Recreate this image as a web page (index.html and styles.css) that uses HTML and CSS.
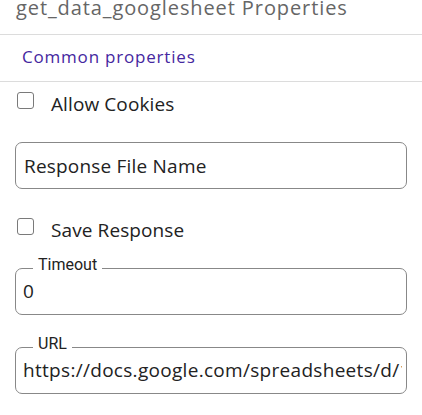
FILE: index.html
```html
<!DOCTYPE html>
<html>
<head>
<meta charset="utf-8">
<link rel="stylesheet" href="styles.css">
</head>
<body>
<div class="panel">
  <div class="header"><h1 class="title">get_data_googlesheet Properties</h1></div>
  <div class="section"><span class="section-title">Common properties</span></div>
  <div class="form">
    <label class="check"><span class="box"></span><span class="check-label">Allow Cookies</span></label>
    <div class="input">Response File Name</div>
    <label class="check"><span class="box"></span><span class="check-label">Save Response</span></label>
    <fieldset class="field"><legend>Timeout</legend><div class="value">0</div></fieldset>
    <fieldset class="field"><legend>URL</legend><div class="value">https://docs.google.com/spreadsheets/d/1BxiMVs0XRA5nFMdKvBdBZjgmUUqptlbs74OgvE2upms</div></fieldset>
  </div>
</div>
</body>
</html>
```
FILE: styles.css
```css
* { box-sizing: border-box; }
body { margin: 0; background: #fff; font-family: "Open Sans", "Noto Sans", sans-serif; }
.panel { width: 422px; }
.header { height: 35px; border-bottom: 1px solid #dcdcdc; overflow: hidden; }
.title { margin: -5px 0 0 16px; font-size: 20px; font-weight: 400; line-height: 26px; color: #666; white-space: nowrap; letter-spacing: 0.9px; }
.section { height: 47px; border-bottom: 1px solid #dcdcdc; padding: 10px 0 0 22px; }
.section-title { font-size: 17px; line-height: 24px; color: #4527a0; letter-spacing: 0.8px; }
.form { padding: 10px 15px 0 15px; display: flex; flex-direction: column; }
.check { display: flex; align-items: flex-start; height: 22px; }
.box { width: 17px; height: 17px; margin-left: 2px; border: 1.5px solid #7a7a7a; border-radius: 3px; flex: none; }
.check-label { margin: 2px 0 0 17px; font-size: 19px; line-height: 20px; color: #222; letter-spacing: 0.1px; }
.input { height: 47px; border: 1px solid #888; border-radius: 7px; padding: 0 8px; display: flex; align-items: center; font-size: 19px; color: #222; margin-top: 28px; letter-spacing: 0.2px; }
.input + .check { margin-top: 29px; }
.field { margin: 0; border: 1px solid #888; border-radius: 7px; padding: 0 4px 0 7px; height: 58px; min-width: 0; }
.check + .field { margin-top: 17px; }
.field + .field { margin-top: 21px; }
legend { font-family: "Roboto", "Liberation Sans", sans-serif; font-size: 16px; color: #222; padding: 0 5px 6px; margin-left: 10px; line-height: 16px; }
.value { font-size: 19px; color: #222; white-space: nowrap; overflow: hidden; line-height: 24px; letter-spacing: 0.3px; }
```
